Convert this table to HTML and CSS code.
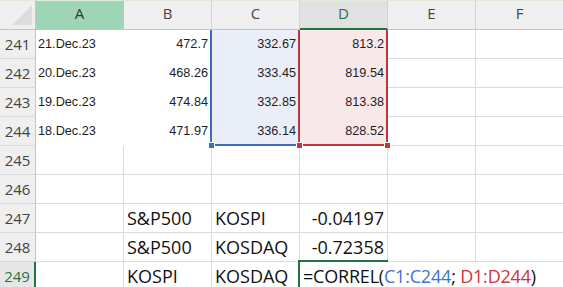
FILE: index.html
```html
<!DOCTYPE html>
<html lang="en">
<head>
<meta charset="utf-8">
<title>Sheet1</title>
<link rel="stylesheet" href="styles.css">
</head>
<body>
<div class="sheet">
  <!-- column headers -->
  <div class="corner"><span class="tri"></span></div>
  <div class="ch ch-hl">A</div>
  <div class="ch">B</div>
  <div class="ch">C</div>
  <div class="ch ch-act">D</div>
  <div class="ch">E</div>
  <div class="ch">F</div>

  <!-- 241 -->
  <div class="rh">241</div>
  <div class="c fill">21.Dec.23</div>
  <div class="c fill num">472.7</div>
  <div class="c fill num tint-c">332.67</div>
  <div class="c fill num tint-d">813.2</div>
  <div class="c"></div>
  <div class="c"></div>

  <!-- 242 -->
  <div class="rh">242</div>
  <div class="c fill">20.Dec.23</div>
  <div class="c fill num">468.26</div>
  <div class="c fill num tint-c">333.45</div>
  <div class="c fill num tint-d">819.54</div>
  <div class="c"></div>
  <div class="c"></div>

  <!-- 243 -->
  <div class="rh">243</div>
  <div class="c fill">19.Dec.23</div>
  <div class="c fill num">474.84</div>
  <div class="c fill num tint-c">332.85</div>
  <div class="c fill num tint-d">813.38</div>
  <div class="c"></div>
  <div class="c"></div>

  <!-- 244 -->
  <div class="rh">244</div>
  <div class="c fill">18.Dec.23</div>
  <div class="c fill num">471.97</div>
  <div class="c fill num tint-c">336.14</div>
  <div class="c fill num tint-d">828.52</div>
  <div class="c"></div>
  <div class="c"></div>

  <!-- 245 -->
  <div class="rh">245</div>
  <div class="c"></div>
  <div class="c"></div>
  <div class="c"></div>
  <div class="c"></div>
  <div class="c"></div>
  <div class="c"></div>

  <!-- 246 -->
  <div class="rh">246</div>
  <div class="c"></div>
  <div class="c"></div>
  <div class="c"></div>
  <div class="c"></div>
  <div class="c"></div>
  <div class="c"></div>

  <!-- 247 -->
  <div class="rh">247</div>
  <div class="c big"></div>
  <div class="c big">S&amp;P500</div>
  <div class="c big">KOSPI</div>
  <div class="c big num">-0.04197</div>
  <div class="c big"></div>
  <div class="c big"></div>

  <!-- 248 -->
  <div class="rh">248</div>
  <div class="c big"></div>
  <div class="c big">S&amp;P500</div>
  <div class="c big">KOSDAQ</div>
  <div class="c big num">-0.72358</div>
  <div class="c big"></div>
  <div class="c big"></div>

  <!-- 249 -->
  <div class="rh rh-act">249</div>
  <div class="c big"></div>
  <div class="c big">KOSPI</div>
  <div class="c big">KOSDAQ</div>
  <div class="c big open"><span class="formula">=CORREL(<span class="ref-c">C1:C244</span>; <span class="ref-d">D1:D244</span>)</span></div>
  <div class="c big open"></div>
  <div class="c big open"></div>

  <!-- referenced ranges and the cell being edited -->
  <div class="range range-c"></div>
  <div class="range range-d"></div>
  <span class="handle h-c"></span>
  <span class="handle h-d1"></span>
  <span class="handle h-d2"></span>
  <div class="active"></div>
</div>
</body>
</html>
```

FILE: styles.css
```css
html, body {
  margin: 0;
  background: #fff;
  overflow: hidden;
}

.sheet {
  position: relative;
  display: grid;
  grid-template-columns: 36px repeat(6, 88px);
  grid-template-rows: 30px;
  grid-auto-rows: 29px;
  width: 564px;
}

/* header row */
.corner,
.ch {
  box-sizing: border-box;
  background: #efefef;
  border-top: 1px solid #e1ebdb;
  border-right: 1px solid #d4d4d4;
  border-bottom: 1px solid #c4c4c4;
}

.corner {
  display: flex;
  align-items: flex-end;
  justify-content: flex-end;
  padding: 0 3px 4px 0;
  border-right-color: #c4c4c4;
}

.tri {
  width: 20px;
  height: 20px;
  background: #dcdcdc;
  clip-path: polygon(100% 0, 100% 100%, 0 100%);
}

.ch {
  display: flex;
  align-items: flex-end;
  justify-content: center;
  padding-bottom: 7px;
  font: 15px/18px "Open Sans", sans-serif;
  color: #444;
}

.ch-hl {
  background: #9fd5b7;
  color: #333;
  border-right-color: #b9c9bf;
}

.ch-act {
  background: #e1e1e1;
  color: #217346;
  border-bottom: 2px solid #217346;
  padding-bottom: 6px;
}

/* row headers */
.rh {
  box-sizing: border-box;
  display: flex;
  align-items: flex-end;
  justify-content: center;
  padding-bottom: 5px;
  background: #efefef;
  border-right: 1px solid #c4c4c4;
  border-bottom: 1px solid #d8d8d8;
  font: 15px/18px "Open Sans", sans-serif;
  color: #444;
}

.rh-act {
  background: #e6e6e6;
  color: #217346;
  border-right: 2px solid #217346;
}

/* cells */
.c {
  box-sizing: border-box;
  display: flex;
  align-items: flex-end;
  min-width: 0;
  padding: 0 3px 6px 2px;
  border-right: 1px solid #dadada;
  border-bottom: 1px solid #dadada;
  font: 12.7px/15px "Liberation Sans", Arial, sans-serif;
  color: #1e1e1e;
  white-space: nowrap;
}

.num {
  justify-content: flex-end;
}

.fill {
  border-color: transparent;
}

.tint-c {
  background: #e9eef8;
}

.tint-d {
  background: #f9e8e9;
}

.big {
  padding: 0 3px 4px 3px;
  font: 18px/20px "Open Sans", sans-serif;
  color: #111;
}

.open {
  border-right-color: transparent;
  overflow: visible;
}

.formula {
  letter-spacing: -0.2px;
  white-space: pre;
}

.ref-c {
  color: #3d74d0;
}

.ref-d {
  color: #d0343c;
}

/* range outlines drawn over the grid */
.range {
  position: absolute;
  top: 30px;
  height: 116px;
  box-sizing: border-box;
}

.range-c {
  left: 210px;
  width: 90px;
  border-left: 2px solid #3a6cc6;
  border-bottom: 2px solid #3a6cc6;
}

.range-d {
  left: 298px;
  width: 90px;
  border-left: 2px solid #c2353d;
  border-right: 2px solid #c2353d;
  border-bottom: 2px solid #c2353d;
}

.handle {
  position: absolute;
  top: 142px;
  width: 5px;
  height: 5px;
  border: 1px solid #fff;
}

.h-c {
  left: 208px;
  background: #3a6cc6;
}

.h-d1 {
  left: 296px;
  background: #c2353d;
}

.h-d2 {
  left: 384px;
  background: #c2353d;
}

.active {
  position: absolute;
  left: 298px;
  top: 260px;
  width: 90px;
  height: 40px;
  box-sizing: border-box;
  border-top: 2px solid #217346;
  border-left: 2px solid #217346;
}
```
